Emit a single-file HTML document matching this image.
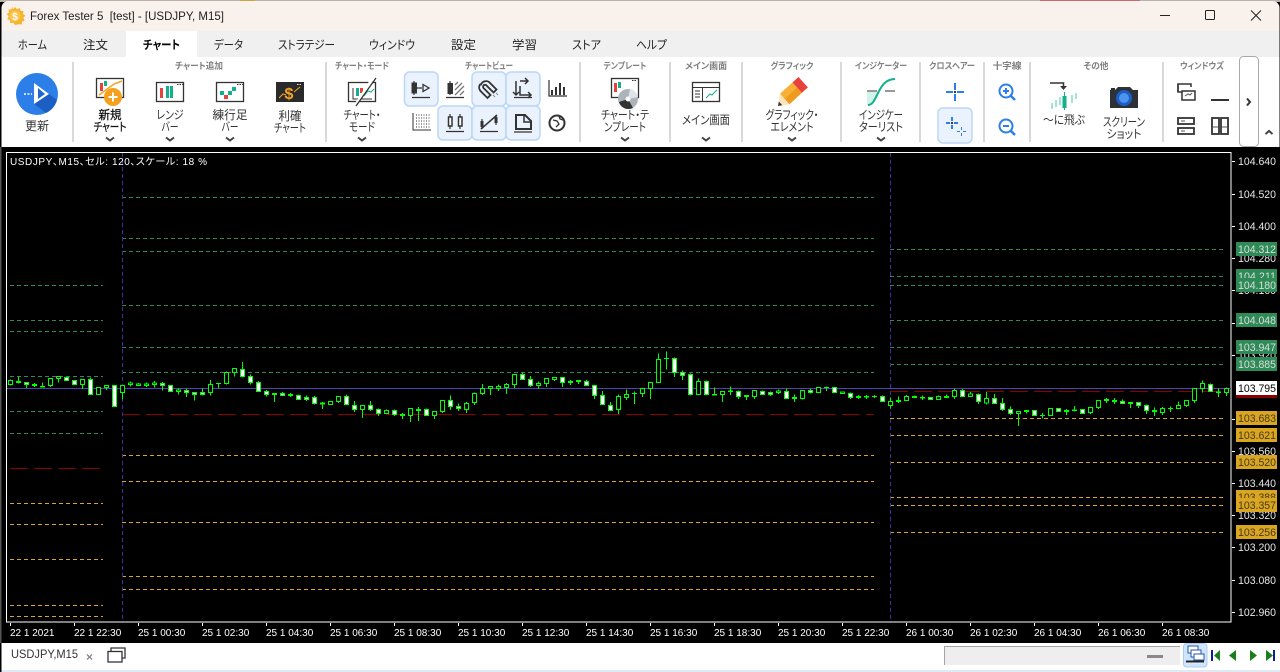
<!DOCTYPE html>
<html lang="ja"><head><meta charset="utf-8"><title>Forex Tester 5</title>
<style>
html,body{margin:0;padding:0;width:1280px;height:672px;overflow:hidden;background:#000}
svg{display:block}
text{font-family:"Liberation Sans","Noto Sans CJK JP",sans-serif;font-feature-settings:"palt";white-space:pre}
.tab{font-size:12px;fill:#222;text-anchor:middle}
.grp{font-size:9px;fill:#808080;text-anchor:middle;font-weight:bold}
.lb{font-size:12px;fill:#333;text-anchor:middle}
.px{font-size:11px;fill:#e8e8e8}
.tm{font-size:10px;fill:#fff}
.tg{font-size:11px;fill:#ddd}
.to{font-size:11px;fill:#443a18}
.ch{fill:none;stroke:#444;stroke-width:2}
.ic{fill:none;stroke:#333;stroke-width:1.5}
.ib{fill:none;stroke:#333;stroke-width:2}
.hl{fill:#eaf3fd;stroke:#bcd6f5;stroke-width:1.5}
.sep{fill:#d9d9d9}
</style></head>
<body>
<svg width="1280" height="672" viewBox="0 0 1280 672" xmlns="http://www.w3.org/2000/svg">
<!-- window chrome -->
<rect width="1280" height="672" fill="#000"/>
<rect x="0" y="0" width="1280" height="2" fill="#b9b3ae"/>
<rect x="240" y="0" width="15" height="2" fill="#c9a544"/>
<rect x="1040" y="0" width="100" height="2" fill="#c56b72"/>
<rect x="1.500" y="1" width="1278" height="30" rx="7" fill="#f8f1ec"/>
<rect x="1.500" y="12" width="1278" height="19" fill="#f8f1ec"/>
<rect x="1.500" y="31" width="1278" height="26" fill="#f0f0f0"/>
<rect x="126" y="31" width="71" height="26" fill="#fff"/>
<rect x="1.500" y="57" width="1278" height="90" fill="#fff"/>
<!-- title -->
<g transform="translate(15 16)">
<path d="M0-9l2 2.200 2.800-1.200.7 2.900 3 .2-.7 2.900 2.500 1.600-2 2.300 1.400 2.700-2.800 1-.1 3-3-.5L0 9l-1.800-2.400-3 .5-.1-3-2.800-1 1.400-2.700-2-2.300 2.500-1.600-.7-2.900 3-.2.700-2.900L-2-6.800z" fill="#f6b42b"/>
<circle r="5.500" fill="#f9c750"/>
<text x="0" y="4" font-size="10" font-weight="bold" fill="#fff" text-anchor="middle">$</text>
</g>
<text x="30" y="20" font-size="12" fill="#222" textLength="194" lengthAdjust="spacingAndGlyphs">Forex Tester 5  [test] - [USDJPY, M15]</text>
<path d="M1160 15.500H1170" stroke="#222" stroke-width="1"/>
<rect x="1205.500" y="10.500" width="9" height="9" rx="1" fill="none" stroke="#222"/>
<path d="M1251 10.500L1261 20.500M1261 10.500L1251 20.500" stroke="#222" stroke-width="1"/>
<!-- tabs -->
<text class="tab" x="32.500" y="49" textLength="29" lengthAdjust="spacingAndGlyphs">ホーム</text>
<text class="tab" x="95.500" y="49" textLength="25" lengthAdjust="spacingAndGlyphs">注文</text>
<text class="tab" x="161.500" y="49" font-weight="bold" style="fill:#000" textLength="37" lengthAdjust="spacingAndGlyphs">チャート</text>
<text class="tab" x="228.500" y="49" textLength="29" lengthAdjust="spacingAndGlyphs">データ</text>
<text class="tab" x="306.500" y="49" textLength="57" lengthAdjust="spacingAndGlyphs">ストラテジー</text>
<text class="tab" x="392" y="49" textLength="46" lengthAdjust="spacingAndGlyphs">ウィンドウ</text>
<text class="tab" x="463.500" y="49" textLength="25" lengthAdjust="spacingAndGlyphs">設定</text>
<text class="tab" x="524.500" y="49" textLength="25" lengthAdjust="spacingAndGlyphs">学習</text>
<text class="tab" x="586.500" y="49" textLength="29" lengthAdjust="spacingAndGlyphs">ストア</text>
<text class="tab" x="651.500" y="49" textLength="31" lengthAdjust="spacingAndGlyphs">ヘルプ</text>
<!-- group labels -->
<text class="grp" x="199" y="69" textLength="48" lengthAdjust="spacingAndGlyphs">チャート追加</text>
<text class="grp" x="362" y="69" textLength="54" lengthAdjust="spacingAndGlyphs">チャート・モード</text>
<text class="grp" x="489" y="69" textLength="48" lengthAdjust="spacingAndGlyphs">チャートビュー</text>
<text class="grp" x="625" y="69" textLength="43" lengthAdjust="spacingAndGlyphs">テンプレート</text>
<text class="grp" x="706" y="69" textLength="42" lengthAdjust="spacingAndGlyphs">メイン画面</text>
<text class="grp" x="792" y="69" textLength="43" lengthAdjust="spacingAndGlyphs">グラフィック</text>
<text class="grp" x="881" y="69" textLength="52" lengthAdjust="spacingAndGlyphs">インジケーター</text>
<text class="grp" x="952" y="69" textLength="46" lengthAdjust="spacingAndGlyphs">クロスヘアー</text>
<text class="grp" x="1007" y="69" textLength="29" lengthAdjust="spacingAndGlyphs">十字線</text>
<text class="grp" x="1096" y="69" textLength="25" lengthAdjust="spacingAndGlyphs">その他</text>
<text class="grp" x="1202" y="69" textLength="44" lengthAdjust="spacingAndGlyphs">ウィンドウズ</text>
<!-- separators -->
<g class="sep"><rect x="72" y="62" width="2" height="80"/><rect x="325" y="62" width="2" height="80"/><rect x="579" y="62" width="2" height="80"/><rect x="669" y="62" width="2" height="80"/><rect x="741" y="62" width="2" height="80"/><rect x="840" y="62" width="2" height="80"/><rect x="919" y="62" width="2" height="80"/><rect x="983" y="62" width="2" height="80"/><rect x="1029" y="62" width="2" height="80"/><rect x="1162" y="62" width="2" height="80"/></g>
<!-- refresh -->
<circle cx="37" cy="94" r="21" fill="#2c7fe8"/>
<path d="M34 83L57 100A21 21 0 0 1 46 113L34 104z" fill="#1c5fc4"/>
<path d="M34 83L49 94L34 104z" fill="#fff"/>
<path d="M38 88L45 94L38 99z" fill="#1f68cf"/>
<path d="M24 94H32" stroke="#fff" stroke-width="1.500" stroke-dasharray="2 1.500"/>
<text class="lb" x="37" y="130" textLength="24" lengthAdjust="spacingAndGlyphs">更新</text>
<!-- new chart -->
<rect x="96.500" y="78.500" width="27" height="19" fill="#fff" stroke="#333" stroke-width="1.300"/>
<rect x="100" y="83" width="3" height="8" fill="#e8413c"/><rect x="104" y="81" width="3" height="5" fill="#12b08c"/>
<path d="M99 95L114 84L122 81" stroke="#f5a623" stroke-width="1.500" fill="none"/>
<circle cx="113" cy="97" r="9" fill="#f5a01f"/><path d="M113 92.500V101.500M108.500 97H117.500" stroke="#fff" stroke-width="2"/>
<text class="lb" x="110" y="119" style="fill:#111;stroke:#111;stroke-width:.25" textLength="23" lengthAdjust="spacingAndGlyphs">新規</text>
<text class="lb" x="110" y="131" style="fill:#111;stroke:#111;stroke-width:.25" textLength="33" lengthAdjust="spacingAndGlyphs">チャート</text>
<path class="ch" d="M106 137.500l4 3 4-3"/>
<!-- range -->
<rect x="156.500" y="82.500" width="27" height="19" fill="#fff" stroke="#333" stroke-width="1.300"/>
<rect x="160" y="88" width="3" height="10" fill="#e8413c"/><rect x="166" y="86" width="3" height="12" fill="#12b08c"/><rect x="170" y="86" width="3" height="12" fill="#12b08c"/>
<path d="M177 84.500h1.500m1 0h1.500m1 0h1" stroke="#333"/>
<text class="lb" x="170" y="119" textLength="27" lengthAdjust="spacingAndGlyphs">レンジ</text><text class="lb" x="170" y="131" textLength="17" lengthAdjust="spacingAndGlyphs">バー</text>
<path class="ch" d="M166 137.500l4 3 4-3"/>
<!-- renko -->
<rect x="216.500" y="82.500" width="27" height="19" fill="#fff" stroke="#333" stroke-width="1.300"/>
<rect x="220" y="91" width="4" height="4" fill="#12b08c"/><rect x="224" y="95" width="4" height="4" fill="#e8413c"/><rect x="228" y="91" width="4" height="4" fill="#12b08c"/><rect x="232" y="87" width="4" height="4" fill="#12b08c"/>
<path d="M237 84.500h1.500m1 0h1.500m1 0h1" stroke="#333"/>
<text class="lb" x="230" y="119" textLength="35" lengthAdjust="spacingAndGlyphs">練行足</text><text class="lb" x="230" y="131" textLength="17" lengthAdjust="spacingAndGlyphs">バー</text>
<path class="ch" d="M226 137.500l4 3 4-3"/>
<!-- TP -->
<rect x="276" y="82" width="28" height="20" fill="#2a2a2a"/>
<path d="M279 98l4-4 3 1" stroke="#f5a623" fill="none"/>
<text x="289" y="99" font-size="16" font-weight="bold" fill="#f5a623" text-anchor="middle">$</text>
<path d="M294 92l6-5" stroke="#f5a623" fill="none"/>
<path d="M297 84.500h1.500m1 0h1.500" stroke="#ddd"/>
<text class="lb" x="290" y="120" textLength="23" lengthAdjust="spacingAndGlyphs">利確</text><text class="lb" x="290" y="132" textLength="32" lengthAdjust="spacingAndGlyphs">チャート</text>
<!-- chart mode -->
<rect x="348.500" y="82.500" width="27" height="19" fill="#fff" stroke="#333" stroke-width="1.300"/>
<rect x="356" y="88" width="3" height="8" fill="#12b08c"/><rect x="360" y="88" width="3" height="5" fill="#e8413c"/>
<path d="M364 96l4-5 3 1 3-3" stroke="#12b08c" fill="none"/>
<path d="M353 88V99H372" stroke="#333" fill="none"/>
<path d="M373 78L355 106" stroke="#fff" stroke-width="3"/><path d="M376 78L356 106" stroke="#333" stroke-width="1.300"/>
<text class="lb" x="362" y="119" textLength="37" lengthAdjust="spacingAndGlyphs">チャート・</text><text class="lb" x="362" y="131" textLength="26" lengthAdjust="spacingAndGlyphs">モード</text>
<path class="ch" d="M358 137.500l4 3 4-3"/>
<!-- chart view highlight -->
<rect class="hl" x="404.500" y="72" width="33.500" height="34" rx="5"/>
<rect class="hl" x="472" y="72" width="34" height="34" rx="5"/>
<rect class="hl" x="506" y="72" width="34" height="34" rx="5"/>
<rect class="hl" x="438" y="106" width="34" height="34" rx="5"/>
<rect class="hl" x="472" y="106" width="34" height="34" rx="5"/>
<rect class="hl" x="506" y="106" width="34" height="34" rx="5"/>
<!-- row 1 -->
<g class="ib"><path d="M414 81V95" stroke-width="1.200"/><rect x="412.500" y="83.500" width="3.500" height="9" fill="#333"/><path d="M417 88H422M423 84.500L429 88L423 91.500z" stroke-width="1.300"/><path d="M412 97.500H430" stroke-width="1.200"/></g>
<g class="ib"><path d="M450 81V95" stroke-width="1.200"/><rect x="448.500" y="84" width="3.500" height="9" fill="#333"/><path d="M455 85l3-3M455 90l7-7M455 95l9-9M460 95l4-4" stroke="#777" stroke-width="1.300"/><path d="M446 97.500H464" stroke-width="1.200"/></g>
<g><path d="M481 84.500a5.500 5.500 0 0 1 8-2.500l7.500 7.500-3 3-7-7a1.800 1.800 0 0 0-3 2.500l7 7-3 3-7-7a5.500 5.500 0 0 1-.5-6.500z" fill="none" stroke="#333" stroke-width="1.800"/><path d="M493 95l2 2M496 93l2 2" stroke="#888"/></g>
<g class="ic"><path d="M516 81V95M513 92l3 3 3-3M520 81H528M525 78l3 3-3 3M520 86V95H531M528 92l3 3-3 3" stroke-width="1.500"/><path d="M514 97.500H532" stroke-width="1.200"/></g>
<g class="ib"><path d="M549 80V96H567" stroke-width="1.200"/><path d="M552 90V95M556 87V95M560 83V95M564 87V95" stroke-width="2"/></g>
<!-- row 2 -->
<g><path d="M413 113V130H431" stroke="#333" fill="none"/><path d="M416 115H430M416 118H430M416 121H430M416 124H430M416 127H430" stroke="#333" stroke-dasharray="1 1.500"/></g>
<g class="ib"><path d="M450 114V129M460 114V129" stroke-width="1.200"/><rect x="448.500" y="117" width="3.500" height="9" fill="#fff" stroke-width="1.500"/><rect x="458.500" y="117" width="3.500" height="9" fill="#fff" stroke-width="1.500"/><path d="M446 131.500H464" stroke-width="1.200"/></g>
<g class="ib"><path d="M481 129L497 115" stroke-width="1.500"/><path d="M482 119V129M496 115V125" stroke-width="1.200"/><rect x="480.500" y="121" width="3" height="6" fill="#333" stroke="none"/><rect x="494.500" y="117" width="3" height="6" fill="#333" stroke="none"/><path d="M480 131.500H498" stroke-width="1.200"/></g>
<g class="ib"><path d="M516 115H525L531 121V129H516z"/><path d="M524 115V122H531" stroke-width="1.500"/><path d="M514 132H532" stroke-width="1.200"/></g>
<g class="ib"><circle cx="557" cy="123" r="7.500"/><path d="M553 120l4 1 2 3-3 3M559 116l1 3 3 1" stroke-width="1.300"/></g>
<!-- template -->
<rect x="611.500" y="78.500" width="27" height="19" fill="#fff" stroke="#333" stroke-width="1.300"/>
<rect x="614" y="83" width="3" height="9" fill="#e8413c"/><rect x="618" y="82" width="3" height="6" fill="#12b08c"/>
<path d="M632 80.500h1.500m1 0h1.500" stroke="#333"/>
<circle cx="628" cy="99" r="10" fill="#adb3bb"/><path d="M628 99L619 102A10 10 0 0 0 633 108z" fill="#333"/><path d="M628 99L630 89A10 10 0 0 1 638 97z" fill="#e0e3e6"/><circle cx="628" cy="99" r="2.500" fill="#fff"/>
<text class="lb" x="625" y="119" textLength="48" lengthAdjust="spacingAndGlyphs">チャート・テ</text><text class="lb" x="625" y="131" textLength="42" lengthAdjust="spacingAndGlyphs">ンプレート</text>
<path class="ch" d="M621 137.500l4 3 4-3"/>
<!-- main -->
<rect x="692.500" y="82.500" width="27" height="19" fill="#fff" stroke="#333" stroke-width="1.300"/>
<path d="M692.500 87.500H719.500M702.500 88V101" stroke="#333"/><path d="M695 91H700M695 94H700M695 97H700" stroke="#333"/><path d="M706 98l4-4 2 1 5-5" stroke="#12b08c" fill="none"/>
<text class="lb" x="706" y="124" textLength="48" lengthAdjust="spacingAndGlyphs">メイン画面</text>
<path class="ch" d="M702 137.500l4 3 4-3"/>
<!-- pencil -->
<path d="M780 93.800L792.500 82.400L801.900 92.800L789.400 104.200z" fill="#f6b034"/>
<path d="M784.700 99L797.200 87.600L801.900 92.800L789.400 104.200z" fill="#ef9a1e"/>
<path d="M792.500 82.400L798.500 77L807.900 87.400L801.900 92.800z" fill="#e8413c"/>
<path d="M778 106L780 93.800L789.400 104.200z" fill="#fbe4bc"/><path d="M778 106l.8-4.500 3.500 3.800z" fill="#333"/>
<text class="lb" x="792" y="119" textLength="53" lengthAdjust="spacingAndGlyphs">グラフィック・</text><text class="lb" x="792" y="131" textLength="43" lengthAdjust="spacingAndGlyphs">エレメント</text>
<path class="ch" d="M788 137.500l4 3 4-3"/>
<!-- indicator -->
<path d="M867 105V92H879L873 105z" fill="#d2f3ea"/><path d="M867 91H877M885 91H895" stroke="#333"/>
<path d="M868 105C878 105 877 79 895 79" stroke="#12b08c" stroke-width="2" fill="none"/>
<text class="lb" x="881" y="119" textLength="44" lengthAdjust="spacingAndGlyphs">インジケー</text><text class="lb" x="881" y="131" textLength="44" lengthAdjust="spacingAndGlyphs">ターリスト</text>
<path class="ch" d="M877 137.500l4 3 4-3"/>
<!-- crosshair -->
<path d="M946 92H953M957 92H964M955 83V90M955 94V101" stroke="#2c7fe8" stroke-width="2" shape-rendering="crispEdges"/><rect x="954" y="91" width="2" height="2" fill="#333"/>
<rect class="hl" x="938" y="108" width="34" height="35" rx="5"/>
<g shape-rendering="crispEdges"><path d="M946 123H950M954 123H958M952 117V121M952 125V129" stroke="#2c7fe8" stroke-width="2"/><rect x="951" y="122" width="2" height="2" fill="#333"/>
<path d="M957 131.500H960M963 131.500H966M961.500 127V130M961.500 133V136" stroke="#2c7fe8" stroke-width="1"/></g>
<!-- zoom -->
<circle cx="1006" cy="91" r="6.500" fill="none" stroke="#2c7fe8" stroke-width="2"/><path d="M1003 91H1009M1006 88V94" stroke="#2c7fe8" stroke-width="2"/><path d="M1011 96L1015 100" stroke="#2c7fe8" stroke-width="2.500"/>
<circle cx="1006" cy="126" r="6.500" fill="none" stroke="#2c7fe8" stroke-width="2"/><path d="M1003 126H1009" stroke="#2c7fe8" stroke-width="2"/><path d="M1011 131L1015 135" stroke="#2c7fe8" stroke-width="2.500"/>
<!-- jump -->
<path d="M1050 83H1063.500V87" stroke="#333" stroke-width="1.500" fill="none"/><path d="M1060 86L1063.500 90L1067 86z" fill="#333"/>
<g fill="#9fe6d3"><rect x="1051" y="103" width="2" height="6"/><rect x="1055" y="100" width="2" height="7"/><rect x="1059" y="97" width="2" height="8"/><rect x="1071" y="95" width="2" height="8"/><rect x="1075" y="93" width="2" height="6"/></g>
<rect x="1062.500" y="96" width="4" height="12" fill="#12b08c"/><path d="M1064.500 92V110" stroke="#12b08c"/>
<text class="lb" x="1064" y="124" textLength="42" lengthAdjust="spacingAndGlyphs">～に飛ぶ</text>
<!-- camera -->
<path d="M1110 90H1115L1118 87H1130L1133 90H1138V108H1110z" fill="#2d3138"/><rect x="1111" y="88" width="4" height="2" fill="#2d3138"/>
<circle cx="1124" cy="98" r="8" fill="#1c5fc4"/><circle cx="1124" cy="98" r="5" fill="#4c93ee"/>
<text class="lb" x="1124" y="126" textLength="42" lengthAdjust="spacingAndGlyphs">スクリーン</text><text class="lb" x="1124" y="138" textLength="35" lengthAdjust="spacingAndGlyphs">ショット</text>
<!-- window icons -->
<path d="M1178 92V84H1191V87" stroke="#333" stroke-width="1.500" fill="none"/><rect x="1182" y="91" width="13" height="9" fill="#fff" stroke="#333" stroke-width="1.500"/><path d="M1178 84V92H1182" stroke="#333" stroke-width="1.500" fill="none"/><path d="M1185 96l3-2 2 1 2-2" stroke="#555" fill="none"/>
<path d="M1211 100H1229" stroke="#333" stroke-width="2"/>
<rect x="1178" y="118" width="16" height="6" fill="none" stroke="#333" stroke-width="1.800"/><rect x="1178" y="128" width="16" height="6" fill="none" stroke="#333" stroke-width="1.800"/><path d="M1181 121h4M1181 131h4" stroke="#555"/>
<rect x="1212" y="118" width="7" height="16" fill="none" stroke="#333" stroke-width="1.800"/><rect x="1221" y="118" width="7" height="16" fill="none" stroke="#333" stroke-width="1.800"/><path d="M1213 127h5M1222 127h5" stroke="#555"/>
<!-- expand -->
<rect x="1239.500" y="56.500" width="19" height="90" rx="4" fill="#fff" stroke="#a9a9a9"/>
<path d="M1247 98.500L1250 102L1247 105.500" fill="none" stroke="#333" stroke-width="2"/>
<path class="ch" d="M1265.500 134l3.500-3 3.500 3"/>
<!-- chart frame -->
<rect x="0" y="147" width="1280" height="496" fill="#000"/>
<rect x="0" y="147" width="1.500" height="496" fill="#555"/>
<rect x="6.500" y="152.500" width="1224.500" height="469.500" fill="#000" stroke="#fff"/>
<svg x="7" y="153" width="1224" height="469" viewBox="7 153 1224 469">
<g fill="none" stroke-width="1" shape-rendering="crispEdges">
<path stroke="#2e8b57" stroke-dasharray="4 3" d="M10 285.500H103M10 320.500H103M10 331.500H103M10 376.500H103M10 411.500H103M10 433.500H103M122 197.500H874M122 238.500H874M122 251.500H874M122 305.500H874M122 347.500H874M122 372.500H874M890 249.500H1223M890 276.500H1223M890 285.500H1223M890 320.500H1223M890 347.500H1223M890 364.500H1223"/>
<path stroke="#daa520" stroke-dasharray="4 3" d="M10 503.500H103M10 524.500H103M10 559.500H103M10 605.500H103M10 616.500H103M122 455.500H874M122 481.500H874M122 522.500H874M122 576.500H874M122 589.500H874M890 418.500H1223M890 435.500H1223M890 462.500H1223M890 497.500H1223M890 505.500H1223M890 532.500H1223"/>
<path stroke="#8b0000" stroke-dasharray="18 6" d="M10 468.500H103M122 414.500H874M890 391.500H1223"/>
<path stroke="#3c2f9e" stroke-dasharray="4 3" d="M122.500 153V622M890.500 153V622"/>
<path stroke="#5042b4" d="M7 388.500H1231"/>
</g>
<!-- candles -->
<g transform="translate(0 340) scale(.33333)" fill="none" stroke="#0f0" stroke-width="3" shape-rendering="crispEdges">
<path d="M31.500 118V136M55.500 110V131M79.500 127V144M103.500 129V141M127.500 128V141M151.500 115V141M175.500 108V128M247.500 118V147M271.500 112V165M319.500 137V150M367.500 136V178M391.500 124V139M415.500 129V138M439.500 128V141M463.500 123V143M487.500 126V152M535.500 145V164M559.500 146V171M583.500 157V182M607.500 146V167M631.500 120V167M655.500 130V146M679.500 94V133M703.500 85V110M727.500 66V113M751.500 103V134M775.500 123V154M799.500 150V170M823.500 160V186M847.500 156V168M871.500 159V171M895.500 163V178M919.500 166V183M943.500 168V194"/>
<path fill="#000" d="M25.500 121h12v13h-12zM49.500 124h12v4h-12zM97.500 133h12v4h-12zM121.500 139h12v2h-12zM145.500 115h12v22h-12zM169.500 110h12v6h-12zM241.500 118h12v16h-12zM289.500 142h12v21h-12zM313.500 137h12v6h-12zM361.500 136h12v22h-12zM385.500 129h12v4h-12zM409.500 132h12v4h-12zM433.500 132h12v4h-12zM457.500 129h12v4h-12zM529.500 150h12v4h-12zM625.500 133h12v24h-12zM649.500 130h12v1h-12zM673.500 97h12v34h-12zM697.500 85h12v12h-12zM817.500 160h12v3h-12zM865.500 164h12v2h-12z"/>
<path fill="#fff" d="M73.500 127h12v6h-12zM193.500 112h12v9h-12zM217.500 121h12v12h-12zM265.500 118h12v45h-12zM337.500 136h12v63h-12zM481.500 130h12v6h-12zM505.500 137h12v17h-12zM553.500 151h12v6h-12zM577.500 157h12v6h-12zM601.500 157h12v6h-12zM721.500 88h12v21h-12zM745.500 109h12v18h-12zM769.500 127h12v27h-12zM793.500 154h12v9h-12zM841.500 160h12v6h-12zM889.500 166h12v12h-12zM913.500 172h12v6h-12zM937.500 172h12v18h-12z"/>
</g>
<g transform="translate(320 340) scale(.33333)" fill="none" stroke="#0f0" stroke-width="3" shape-rendering="crispEdges">
<path d="M7.500 186V207M55.500 169V189M79.500 163V193M103.500 183V216M127.500 196V234M151.500 183V213M175.500 205V228M199.500 208V220M223.500 208V228M247.500 219V237M271.500 205V246M295.500 201V243M319.500 205V226M343.500 214V237M367.500 181V219M391.500 166V210M415.500 190V213M439.500 186V219M463.500 157V195M487.500 132V165M511.500 139V165M535.500 133V153M559.500 129V162M583.500 103V144M607.500 97V118M631.500 108V141M655.500 125V147M679.500 115V141M703.500 112V123M727.500 112V141M751.500 120V135M775.500 120V132M799.500 120V136M823.500 136V177M847.500 153V193M871.500 186V211M895.500 163V222M919.500 148V180M943.500 155V192"/>
<path fill="#000" d="M1.500 189h12v3h-12zM25.500 184h12v9h-12zM49.500 169h12v16h-12zM121.500 196h12v12h-12zM193.500 211h12v9h-12zM241.500 223h12v3h-12zM265.500 205h12v21h-12zM289.500 208h12v3h-12zM337.500 214h12v12h-12zM361.500 181h12v34h-12zM433.500 190h12v18h-12zM457.500 160h12v27h-12zM481.500 145h12v15h-12zM505.500 139h12v6h-12zM529.500 139h12v6h-12zM553.500 133h12v10h-12zM577.500 103h12v30h-12zM649.500 130h12v6h-12zM673.500 115h12v15h-12zM697.500 112h12v6h-12zM745.500 124h12v4h-12zM769.500 122h12v3h-12zM889.500 169h12v39h-12zM913.500 163h12v9h-12zM937.500 160h12v1h-12z"/>
<path fill="#fff" d="M73.500 169h12v24h-12zM97.500 196h12v12h-12zM145.500 196h12v12h-12zM169.500 208h12v12h-12zM217.500 211h12v12h-12zM313.500 208h12v18h-12zM385.500 181h12v18h-12zM409.500 199h12v6h-12zM601.500 103h12v15h-12zM625.500 118h12v18h-12zM721.500 112h12v15h-12zM793.500 124h12v12h-12zM817.500 136h12v30h-12zM841.500 166h12v27h-12zM865.500 196h12v15h-12z"/>
</g>
<g transform="translate(640 340) scale(.33333)" fill="none" stroke="#0f0" stroke-width="3" shape-rendering="crispEdges">
<path d="M7.500 145V171M31.500 127V177M55.500 40V127M79.500 34V88M103.500 52V111M127.500 91V120M151.500 100V167M175.500 115V163M199.500 121V163M223.500 142V166M247.500 154V186M271.500 139V165M295.500 151V177M319.500 166V180M343.500 151V177M367.500 151V165M391.500 154V168M415.500 148V162M439.500 145V176M463.500 163V186M487.500 151V178M511.500 145V160M559.500 139V153M607.500 154V160M631.500 157V177M655.500 165V177M679.500 165V177M703.500 165V174M727.500 166V184M751.500 172V206M775.500 169V189M799.500 165V181M823.500 166V172M847.500 166V180M895.500 166V178M919.500 163V172M943.500 145V177"/>
<path fill="#000" d="M1.500 145h12v15h-12zM25.500 127h12v18h-12zM49.500 58h12v69h-12zM73.500 55h12v1h-12zM169.500 124h12v39h-12zM217.500 163h12v2h-12zM241.500 154h12v9h-12zM265.500 153h12v2h-12zM313.500 166h12v3h-12zM337.500 151h12v18h-12zM409.500 153h12v4h-12zM457.500 172h12v4h-12zM481.500 151h12v24h-12zM529.500 142h12v15h-12zM553.500 142h12v1h-12zM601.500 156h12v4h-12zM649.500 169h12v3h-12zM673.500 169h12v2h-12zM697.500 169h12v1h-12zM745.500 184h12v12h-12zM769.500 181h12v4h-12zM793.500 169h12v12h-12zM817.500 169h12v3h-12zM841.500 172h12v2h-12zM889.500 169h12v9h-12zM913.500 169h12v3h-12zM937.500 151h12v18h-12z"/>
<path fill="#fff" d="M97.500 55h12v42h-12zM121.500 97h12v9h-12zM145.500 103h12v60h-12zM193.500 124h12v39h-12zM289.500 154h12v15h-12zM361.500 154h12v9h-12zM385.500 157h12v6h-12zM433.500 154h12v22h-12zM505.500 151h12v6h-12zM577.500 142h12v15h-12zM625.500 160h12v12h-12zM721.500 169h12v15h-12zM865.500 172h12v6h-12z"/>
</g>
<g transform="translate(910 360) scale(.33333)" fill="none" stroke="#0f0" stroke-width="3" shape-rendering="crispEdges">
<path d="M157.500 87V110M181.500 96V110M205.500 100V132M229.500 96V133M253.500 102V130M277.500 114V153M301.500 139V165M325.500 154V198M349.500 151V160M397.500 159V175M469.500 147V165M493.500 138V155M541.500 142V162M565.500 121V147M589.500 114V129M613.500 114V132M637.500 118V130M661.500 127V144M685.500 127V144M709.500 133V162M733.500 142V168M757.500 141V165M781.500 139V156M805.500 124V145M829.500 121V141M853.500 85V129M877.500 61V98M901.500 70V94M925.500 85V111M949.500 82V108"/>
<path fill="#000" d="M175.500 102h12v8h-12zM223.500 115h12v14h-12zM319.500 154h12v6h-12zM343.500 151h12v3h-12zM391.500 166h12v1h-12zM415.500 145h12v21h-12zM463.500 151h12v3h-12zM487.500 150h12v2h-12zM535.500 142h12v16h-12zM559.500 121h12v22h-12zM583.500 118h12v4h-12zM607.500 121h12v3h-12zM655.500 127h12v3h-12zM727.500 151h12v3h-12zM751.500 145h12v13h-12zM775.500 145h12v1h-12zM799.500 136h12v9h-12zM823.500 121h12v15h-12zM847.500 85h12v36h-12zM871.500 70h12v15h-12zM919.500 96h12v2h-12zM943.500 85h12v12h-12z"/>
<path fill="#fff" d="M151.500 91h12v19h-12zM199.500 103h12v21h-12zM247.500 115h12v15h-12zM271.500 130h12v18h-12zM295.500 148h12v12h-12zM367.500 151h12v15h-12zM439.500 145h12v9h-12zM511.500 148h12v12h-12zM631.500 124h12v6h-12zM679.500 127h12v9h-12zM703.500 136h12v15h-12zM895.500 73h12v21h-12z"/>
</g>
</svg>
<text x="10" y="165" font-size="10" fill="#fff" textLength="197" lengthAdjust="spacing">USDJPY、M15、セル: 120、スケール: 18 %</text>
<!-- price ticks -->
<path d="M1232 161.500H1235M1232 194.500H1235M1232 226.500H1235M1232 258.500H1235M1232 290.500H1235M1232 323.500H1235M1232 355.500H1235M1232 419.500H1235M1232 451.500H1235M1232 483.500H1235M1232 515.500H1235M1232 547.500H1235M1232 580.500H1235M1232 612.500H1235" stroke="#fff"/>
<g>
<text class="px" x="1238" y="165" textLength="38" lengthAdjust="spacingAndGlyphs">104.640</text><text class="px" x="1238" y="198" textLength="38" lengthAdjust="spacingAndGlyphs">104.520</text><text class="px" x="1238" y="230" textLength="38" lengthAdjust="spacingAndGlyphs">104.400</text><text class="px" x="1238" y="262" textLength="38" lengthAdjust="spacingAndGlyphs">104.280</text><text class="px" x="1238" y="294" textLength="38" lengthAdjust="spacingAndGlyphs">104.160</text><text class="px" x="1238" y="327" textLength="38" lengthAdjust="spacingAndGlyphs">104.040</text><text class="px" x="1238" y="359" textLength="38" lengthAdjust="spacingAndGlyphs">103.920</text><text class="px" x="1238" y="455" textLength="38" lengthAdjust="spacingAndGlyphs">103.560</text><text class="px" x="1238" y="487" textLength="38" lengthAdjust="spacingAndGlyphs">103.440</text><text class="px" x="1238" y="519" textLength="38" lengthAdjust="spacingAndGlyphs">103.320</text><text class="px" x="1238" y="551" textLength="38" lengthAdjust="spacingAndGlyphs">103.200</text><text class="px" x="1238" y="584" textLength="38" lengthAdjust="spacingAndGlyphs">103.080</text><text class="px" x="1238" y="616" textLength="38" lengthAdjust="spacingAndGlyphs">102.960</text>
</g>
<!-- green tags -->
<g fill="#2e8b57"><rect x="1236" y="242" width="41" height="14"/><rect x="1236" y="269" width="41" height="14"/><rect x="1236" y="313" width="41" height="14"/><rect x="1236" y="340" width="41" height="14"/><rect x="1236" y="357" width="41" height="14"/></g>
<text class="tg" x="1238" y="253" textLength="38" lengthAdjust="spacingAndGlyphs">104.312</text><text class="tg" x="1238" y="280" textLength="38" lengthAdjust="spacingAndGlyphs">104.211</text>
<rect x="1236" y="278" width="41" height="14" fill="#2e8b57"/>
<text class="tg" x="1238" y="289" textLength="38" lengthAdjust="spacingAndGlyphs">104.180</text><text class="tg" x="1238" y="324" textLength="38" lengthAdjust="spacingAndGlyphs">104.048</text><text class="tg" x="1238" y="351" textLength="38" lengthAdjust="spacingAndGlyphs">103.947</text><text class="tg" x="1238" y="368" textLength="38" lengthAdjust="spacingAndGlyphs">103.885</text>
<!-- current -->
<rect x="1236" y="381" width="41" height="14" fill="#fff"/><rect x="1236" y="395" width="41" height="3" fill="#8b0000"/>
<text x="1238" y="392" font-size="11" fill="#000" textLength="38" lengthAdjust="spacingAndGlyphs">103.795</text>
<!-- orange tags -->
<g fill="#daa520"><rect x="1236" y="411" width="41" height="14"/><rect x="1236" y="428" width="41" height="14"/><rect x="1236" y="455" width="41" height="14"/><rect x="1236" y="490" width="41" height="14"/></g>
<text class="to" x="1238" y="422" textLength="38" lengthAdjust="spacingAndGlyphs">103.683</text><text class="to" x="1238" y="439" textLength="38" lengthAdjust="spacingAndGlyphs">103.621</text><text class="to" x="1238" y="466" textLength="38" lengthAdjust="spacingAndGlyphs">103.520</text><text class="to" x="1238" y="501" textLength="38" lengthAdjust="spacingAndGlyphs">103.388</text>
<rect x="1236" y="498" width="41" height="14" fill="#daa520"/><rect x="1236" y="525" width="41" height="14" fill="#daa520"/>
<text class="to" x="1238" y="509" textLength="38" lengthAdjust="spacingAndGlyphs">103.357</text><text class="to" x="1238" y="536" textLength="38" lengthAdjust="spacingAndGlyphs">103.256</text>
<!-- time axis -->
<path d="M10.500 623V626M74.500 623V626M138.500 623V626M202.500 623V626M266.500 623V626M330.500 623V626M394.500 623V626M458.500 623V626M522.500 623V626M586.500 623V626M650.500 623V626M714.500 623V626M778.500 623V626M842.500 623V626M906.500 623V626M970.500 623V626M1034.500 623V626M1098.500 623V626M1162.500 623V626" stroke="#fff"/>
<g>
<text class="tm" x="10" y="636">22 1 2021</text><text class="tm" x="74" y="636">22 1 22:30</text><text class="tm" x="138" y="636">25 1 00:30</text><text class="tm" x="202" y="636">25 1 02:30</text><text class="tm" x="266" y="636">25 1 04:30</text><text class="tm" x="330" y="636">25 1 06:30</text><text class="tm" x="394" y="636">25 1 08:30</text><text class="tm" x="458" y="636">25 1 10:30</text><text class="tm" x="522" y="636">25 1 12:30</text><text class="tm" x="586" y="636">25 1 14:30</text><text class="tm" x="650" y="636">25 1 16:30</text><text class="tm" x="714" y="636">25 1 18:30</text><text class="tm" x="778" y="636">25 1 20:30</text><text class="tm" x="842" y="636">25 1 22:30</text><text class="tm" x="906" y="636">26 1 00:30</text><text class="tm" x="970" y="636">26 1 02:30</text><text class="tm" x="1034" y="636">26 1 04:30</text><text class="tm" x="1098" y="636">26 1 06:30</text><text class="tm" x="1162" y="636">26 1 08:30</text>
</g>
<!-- bottom bar -->
<rect x="1.500" y="643" width="1278.500" height="29" fill="#fff"/>
<rect x="1.500" y="670" width="1278.500" height="2" fill="#dfeaf6"/>
<text x="11" y="658" font-size="12" fill="#333" textLength="67" lengthAdjust="spacingAndGlyphs">USDJPY,M15</text>
<path d="M87 654.500L92 659.500M92 654.500L87 659.500" stroke="#888" stroke-width="1.300"/>
<path d="M111 651V648H125V658H122" fill="none" stroke="#333" stroke-width="1.300"/><rect x="108" y="651.500" width="14" height="10.500" fill="#fff" stroke="#333" stroke-width="1.300"/>
<rect x="944" y="646" width="236" height="19" fill="#eee"/><path d="M944.500 665V646.500H1180" fill="none" stroke="#a5a5a5"/>
<rect x="1147" y="655" width="16" height="3" fill="#888"/>
<rect x="1183.500" y="643.500" width="23.500" height="23.500" rx="3" fill="#cfe5fb" stroke="#a9cdf2"/>
<g fill="#fff" stroke="#2456a8"><rect x="1188" y="646" width="10" height="7"/><rect x="1191" y="650" width="10" height="7"/><rect x="1194" y="654" width="10" height="6"/></g>
<path d="M1186 661.500H1204" stroke="#222" stroke-width="2"/><path d="M1186 663H1204" stroke="#fff" stroke-width=".6" stroke-dasharray="5 1"/>
<rect x="1211" y="650" width="2" height="11" fill="#0b1f8f"/><path d="M1220 650V661L1214 655.500z" fill="#1a7f1a"/>
<path d="M1236 650V661L1229 655.500z" fill="#1a7f1a"/>
<path d="M1250 650V661L1257 655.500z" fill="#1a7f1a"/>
<path d="M1266 650V661L1273 655.500z" fill="#1a7f1a"/><rect x="1273" y="650" width="2" height="11" fill="#0b1f8f"/>
</svg>
</body></html>
